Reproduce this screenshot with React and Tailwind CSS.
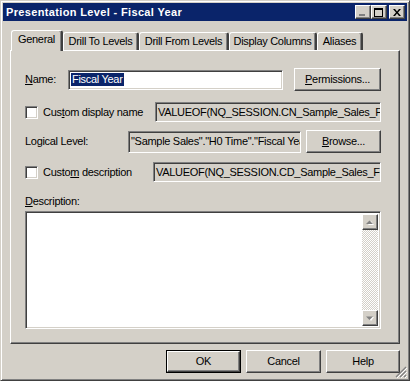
import React from 'react';

// classic win2000 bevels
const raised =
  'border border-t-white border-l-white border-r-[#404040] border-b-[#404040] shadow-[inset_-1px_-1px_0_#808080]';
const sunken =
  'border border-t-[#808080] border-l-[#808080] border-r-white border-b-white shadow-[inset_1px_1px_0_#404040,inset_-1px_-1px_0_#d4d0c8]';

const tabs = [
  { label: 'General', w: 'w-[52px]', active: true },
  { label: 'Drill To Levels', w: 'w-[76px]' },
  { label: 'Drill From Levels', w: 'w-[90px]' },
  { label: 'Display Columns', w: 'w-[88px]' },
  { label: 'Aliases', w: 'w-[46px]' }
];

function Checkbox() {
  return <div className={`w-[13px] h-[13px] shrink-0 bg-white ${sunken}`} />;
}

function Button({ children, className = '' }) {
  return (
    <div className={`flex items-center justify-center bg-[#d4d0c8] ${raised} ${className}`}>
      {children}
    </div>
  );
}

function ReadOnly({ text, className = '' }) {
  return (
    <div className={`bg-[#d4d0c8] overflow-hidden whitespace-nowrap pl-[2px] flex items-center ${sunken} ${className}`}>
      {text}
    </div>
  );
}

function Arrow({ up }) {
  return (
    <div className={`w-[16px] h-[16px] bg-[#d4d0c8] flex items-center justify-center ${raised}`}>
      <svg width="8" height="5" viewBox="0 0 8 5">
        {up ? (
          <>
            <path d="M1 5 L4 1 L7 5 Z" fill="#ffffff" transform="translate(1 0)" />
            <path d="M0 4 L3.5 0.5 L7 4 Z" fill="#808080" />
          </>
        ) : (
          <>
            <path d="M1 1 L4 5 L7 1 Z" fill="#ffffff" transform="translate(1 0)" />
            <path d="M0 0.5 L3.5 4 L7 0.5 Z" fill="#808080" />
          </>
        )}
      </svg>
    </div>
  );
}

export default function App() {
  return (
    <div className="w-[410px] h-[381px] bg-[#d4d0c8] border border-t-[#d4d0c8] border-l-[#d4d0c8] border-r-[#404040] border-b-[#404040] shadow-[inset_1px_1px_0_#fff,inset_-1px_-1px_0_#808080] p-[2px] flex flex-col relative font-['Liberation_Sans',Arial,sans-serif] text-[11px] tracking-[-0.3px] text-black leading-none">
      {/* Title bar */}
      <div className="h-[18px] bg-[#0a246a] flex items-center pl-[3px] pr-[2px] shrink-0">
        <span className="text-white font-bold text-[11px] tracking-[0.35px] flex-1">Presentation Level - Fiscal Year</span>
        <Button className="w-[16px] h-[14px] items-end pb-[2px]">
          <div className="w-[6px] h-[2px] bg-[#808080] mr-[2px]" />
        </Button>
        <Button className="w-[16px] h-[14px]">
          <div className="w-[9px] h-[9px] border border-black border-t-2 mr-[1px]" />
        </Button>
        <Button className="w-[16px] h-[14px] ml-[2px]">
          <svg width="8" height="7" viewBox="0 0 8 7" className="mr-[1px]">
            <path d="M0 0 L2 0 L4 2.5 L6 0 L8 0 L5 3.5 L8 7 L6 7 L4 4.5 L2 7 L0 7 L3 3.5 Z" fill="#000" />
          </svg>
        </Button>
      </div>

      {/* Tabs */}
      <div className="mt-[9px] ml-[7px] flex items-end h-[20px] relative z-10 pl-[1px]">
        {tabs.map((t) => (
          <div
            key={t.label}
            className={`${t.w} flex items-center justify-center whitespace-nowrap bg-[#d4d0c8] border-l border-t border-t-white border-l-white border-r-2 border-r-[#404040] rounded-t-[3px] ${
              t.active ? 'h-[21px] -mb-px pb-[3px] shadow-[inset_-1px_0_0_#808080]' : 'h-[18px] shadow-[inset_-1px_0_0_#808080]'
            }`}
          >
            {t.label}
          </div>
        ))}
      </div>

      {/* Panel */}
      <div className={`ml-[7px] w-[390px] h-[294px] bg-[#d4d0c8] ${raised} pl-[14px] pt-[17px] flex flex-col`}>
        <div className="w-[356px] flex flex-col">
          <div className="h-[23px] flex items-center">
            <span className="w-[43px]">
              <u>N</u>ame:
            </span>
            <div className={`w-[215px] h-[20px] bg-white flex items-center pl-[2px] ${sunken}`}>
              <span className="bg-[#0a246a] text-white h-[13px] leading-[13px] px-px">Fiscal Year</span>
            </div>
            <Button className="w-[87px] h-[23px] ml-auto">
              <span>
                <u>P</u>ermissions...
              </span>
            </Button>
          </div>

          <div className="h-[20px] mt-[11px] flex items-center">
            <Checkbox />
            <span className="ml-[5px]">
              Cus<u>t</u>om display name
            </span>
            <ReadOnly className="w-[226px] h-[20px] ml-auto" text="VALUEOF(NQ_SESSION.CN_Sample_Sales_Fiscal_Year)" />
          </div>

          <div className="h-[23px] mt-[8px] flex items-center">
            <span className="w-[103px]">Logical Level:</span>
            <ReadOnly className="w-[173px] h-[22px]" text={'"Sample Sales"."H0 Time"."Fiscal Year"'} />
            <Button className="w-[75px] h-[23px] ml-auto">
              <span>
                <u>B</u>rowse...
              </span>
            </Button>
          </div>

          <div className="h-[20px] mt-[9px] flex items-center">
            <Checkbox />
            <span className="ml-[5px]">
              Custo<u>m</u> description
            </span>
            <ReadOnly className="w-[228px] h-[20px] ml-auto" text="VALUEOF(NQ_SESSION.CD_Sample_Sales_Fiscal_Year)" />
          </div>

          <div className="h-[13px] leading-[13px] mt-[13px]">
            <u>D</u>escription:
          </div>

          <div className={`mt-[3px] w-[356px] h-[118px] bg-white flex justify-end ${sunken} p-[2px]`}>
            <div className="w-[16px] h-full flex flex-col">
              <Arrow up />
              <div className="flex-1 bg-[repeating-conic-gradient(#d4d0c8_0_25%,#ffffff_0_50%)] bg-[length:2px_2px]" />
              <Arrow />
            </div>
          </div>
        </div>
      </div>

      {/* Buttons */}
      <div className="mt-[6px] flex justify-end gap-[5px] pr-[7px]">
        <div className="w-[75px] h-[23px] border border-black">
          <Button className="w-full h-full">OK</Button>
        </div>
        <Button className="w-[75px] h-[23px]">Cancel</Button>
        <Button className="w-[74px] h-[23px]">Help</Button>
      </div>

      {/* size grip */}
      <svg width="12" height="12" viewBox="0 0 12 12" className="absolute right-[2px] bottom-[2px]">
        <path d="M11 1 L1 11 M11 5 L5 11 M11 9 L9 11" stroke="#808080" strokeWidth="1.2" />
        <path d="M12 2 L2 12 M12 6 L6 12 M12 10 L10 12" stroke="#ffffff" strokeWidth="1" />
      </svg>
    </div>
  );
}
